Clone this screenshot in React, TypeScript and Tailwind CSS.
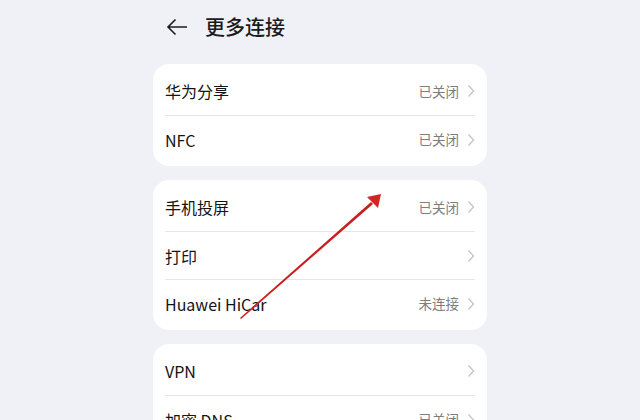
const font = { fontFamily: '"Noto Sans CJK SC", "Noto Sans", sans-serif' }

type Row = { label: string; value?: string }

const groups: Row[][] = [
  [{ label: '华为分享', value: '已关闭' }, { label: 'NFC', value: '已关闭' }],
  [
    { label: '手机投屏', value: '已关闭' },
    { label: '打印' },
    { label: 'Huawei HiCar', value: '未连接' },
  ],
  [{ label: 'VPN' }, { label: '加密 DNS', value: '已关闭' }],
]

function Chevron() {
  return (
    <svg width="8" height="14" viewBox="0 0 8 14" className="ml-2 shrink-0">
      <path d="M1.5 1.5 L6.5 7 L1.5 12.5" fill="none" stroke="#c4c4c8" strokeWidth="1.3" />
    </svg>
  )
}

function Card({ rows }: { rows: Row[] }) {
  return (
    <div className="rounded-[16px] bg-white px-3 py-[3px]">
      {rows.map((r, i) => (
        <div
          key={r.label}
          className={`flex h-12 items-center justify-between ${i > 0 ? 'border-t border-[#e6e6ea]' : ''}`}
        >
          <span className="text-[16px] text-[#141414]">{r.label}</span>
          <div className="flex items-center">
            {r.value && <span className="text-[13.5px] text-[#7d7d80]">{r.value}</span>}
            <Chevron />
          </div>
        </div>
      ))}
    </div>
  )
}

export default function App() {
  return (
    <div className="relative h-[420px] w-[640px] overflow-hidden bg-[#f0f1f6]" style={font}>
      <div className="mx-auto w-[334px] pt-[12px]">
        <div className="flex h-[30px] items-center pl-[13px]">
          <svg width="22" height="18" viewBox="0 0 22 18">
            <path d="M21 9 H2 M9.5 1.5 L2 9 L9.5 16.5" fill="none" stroke="#1b1b1b" strokeWidth="1.6" />
          </svg>
          <span className="ml-[17px] text-[20px] font-medium text-[#1b1b1b]">更多连接</span>
        </div>
        <div className="mt-[22px] flex flex-col gap-[14px]">
          {groups.map((g, i) => (
            <Card key={i} rows={g} />
          ))}
        </div>
      </div>
      <svg className="pointer-events-none absolute left-0 top-0" width="640" height="420">
        <polygon points="240,318 241,319 373,204 371,202" fill="#c81e1e" />
        <polygon points="381,194 367,197 378,208" fill="#d42424" />
      </svg>
    </div>
  )
}
